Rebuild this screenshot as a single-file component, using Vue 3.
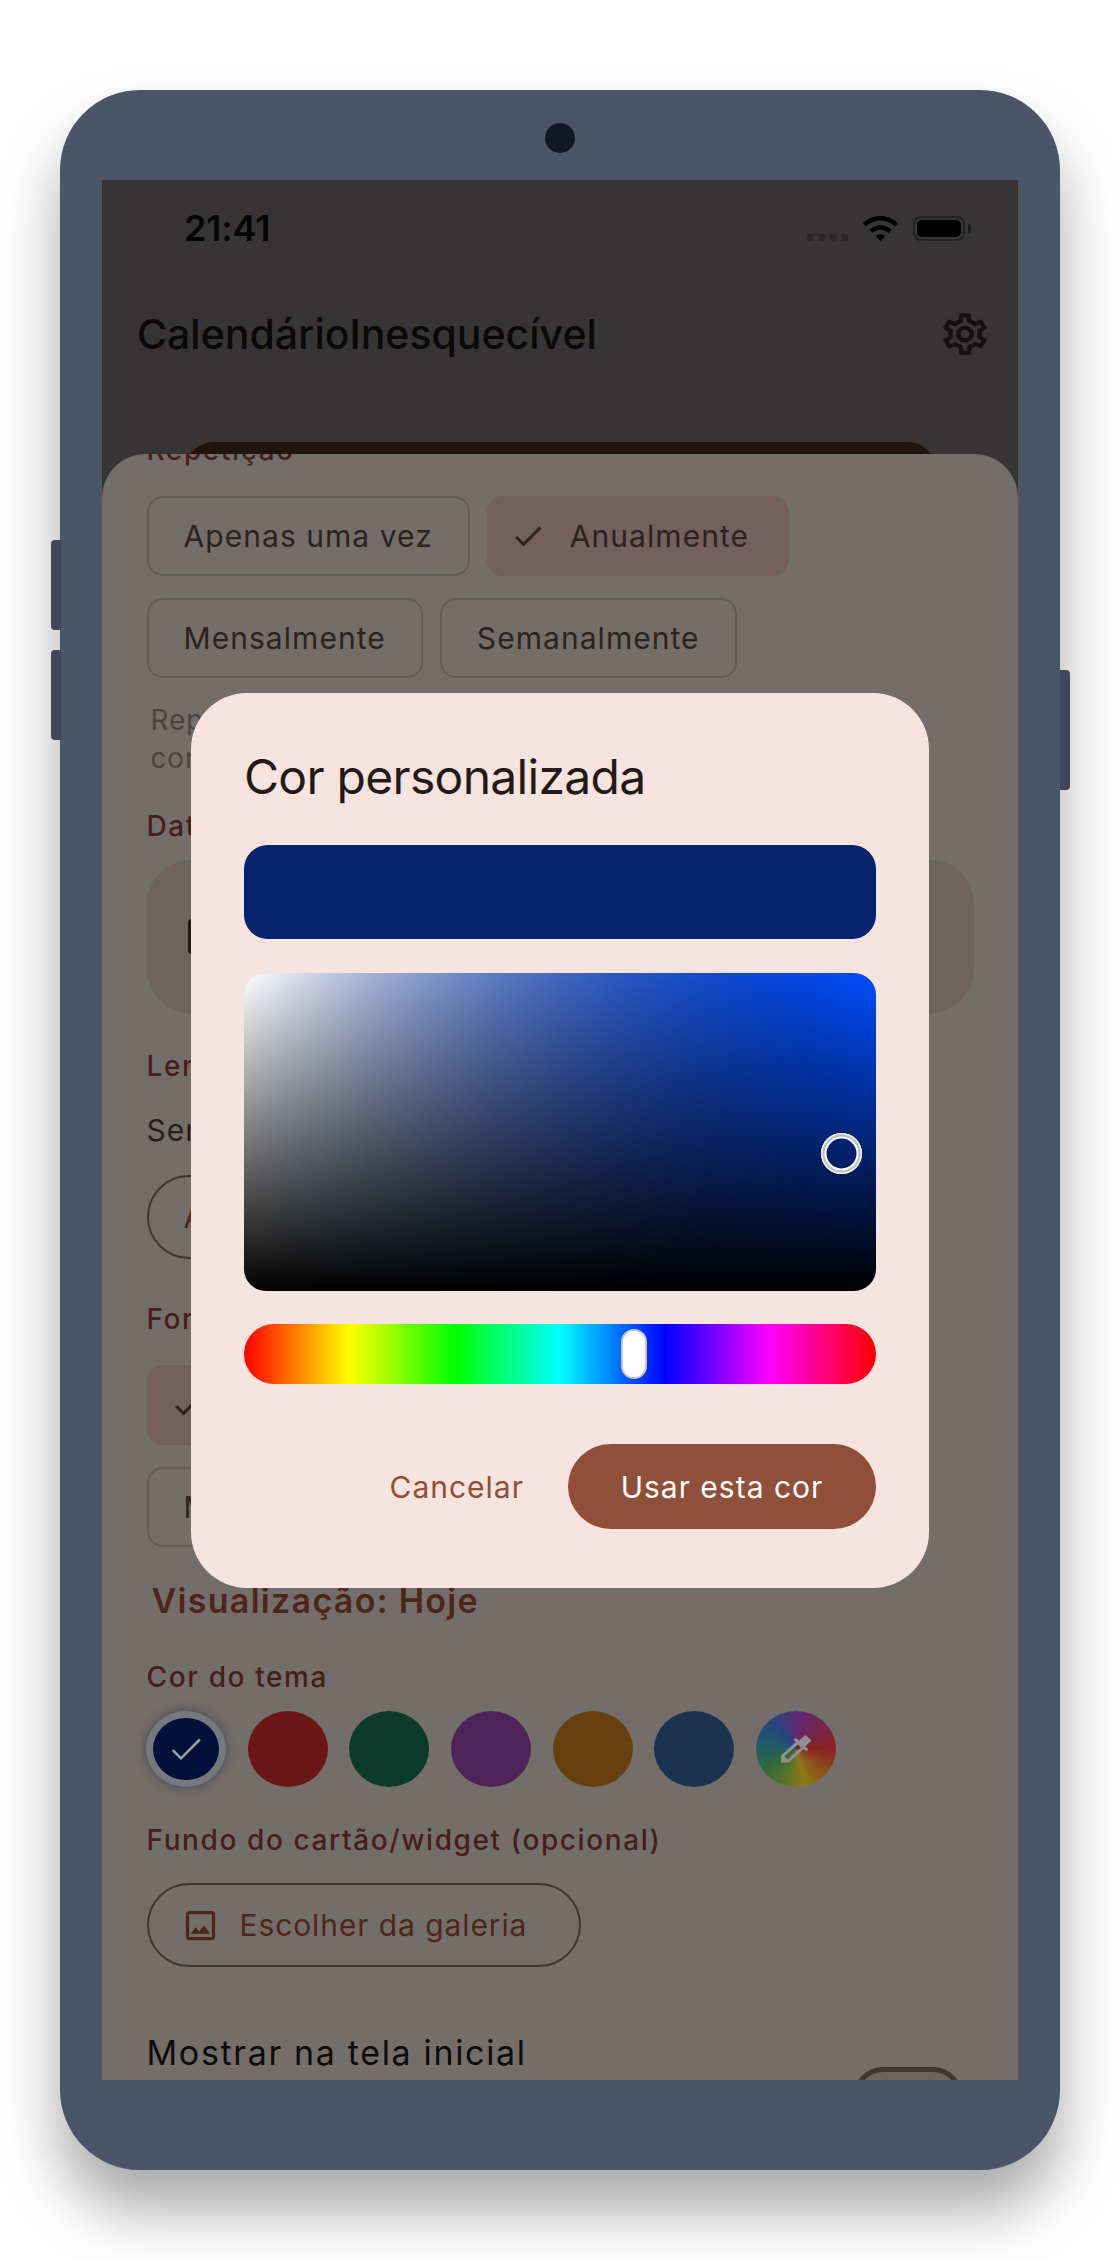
<script setup>
const swatches = ['#6b1717', '#0b3b2a', '#4e235a', '#67400f', '#1b334f']
const gear = 'M19.43 12.98c.04-.32.07-.64.07-.98 0-.34-.03-.66-.07-.98l2.11-1.65c.19-.15.24-.42.12-.64l-2-3.46c-.09-.16-.26-.25-.44-.25-.06 0-.12.01-.17.03l-2.49 1c-.52-.4-1.08-.73-1.69-.98l-.38-2.65C14.46 2.18 14.25 2 14 2h-4c-.25 0-.46.18-.49.42l-.38 2.65c-.61.25-1.17.59-1.69.98l-2.49-1c-.06-.02-.12-.03-.18-.03-.17 0-.34.09-.43.25l-2 3.46c-.13.22-.07.49.12.64l2.11 1.65c-.04.32-.07.65-.07.98 0 .33.03.66.07.98l-2.11 1.65c-.19.15-.24.42-.12.64l2 3.46c.09.16.26.25.44.25.06 0 .12-.01.17-.03l2.49-1c.52.4 1.08.73 1.69.98l.38 2.65c.03.24.24.42.49.42h4c.25 0 .46-.18.49-.42l.38-2.65c.61-.25 1.17-.59 1.69-.98l2.49 1c.06.02.12.03.18.03.17 0 .34-.09.43-.25l2-3.46c.12-.22.07-.49-.12-.64l-2.11-1.65zm-1.98-1.71c.04.31.05.52.05.73 0 .21-.02.43-.05.73l-.14 1.13.89.7 1.08.84-.7 1.21-1.27-.51-1.04-.42-.9.68c-.43.32-.84.56-1.25.73l-1.06.43-.16 1.13-.2 1.35h-1.4l-.19-1.35-.16-1.13-1.06-.43c-.43-.18-.83-.41-1.23-.71l-.91-.7-1.06.43-1.27.51-.7-1.21 1.08-.84.89-.7-.14-1.13c-.03-.31-.05-.54-.05-.74s.02-.43.05-.73l.14-1.13-.89-.7-1.08-.84.7-1.21 1.27.51 1.04.42.9-.68c.43-.32.84-.56 1.25-.73l1.06-.43.16-1.13.2-1.35h1.39l.19 1.35.16 1.13 1.06.43c.43.18.83.41 1.23.71l.91.7 1.06-.43 1.27-.51.7 1.21-1.07.85-.89.7.14 1.13zM12 8c-2.21 0-4 1.79-4 4s1.79 4 4 4 4-1.79 4-4-1.79-4-4-4zm0 6c-1.1 0-2-.9-2-2s.9-2 2-2 2 .9 2 2-.9 2-2 2z'
const check = 'M9 16.17L4.83 12l-1.41 1.41L9 19 21 7l-1.41-1.41z'
</script>

<template>
  <div class="page">
    <div class="phone">
      <span class="hw hw-l1"></span>
      <span class="hw hw-l2"></span>
      <span class="hw hw-r"></span>
      <span class="camera"></span>

      <div class="screen">
        <div class="status">
          <span class="time">21:41</span>
          <div class="status-icons">
            <div class="dots"><i></i><i></i><i></i><i></i></div>
            <svg class="wifi" viewBox="1 4.4 22 15.6" preserveAspectRatio="none"><path d="M1 9l2 2c4.97-4.97 13.03-4.97 18 0l2-2C16.93 2.93 7.08 2.93 1 9zm8 8l3 3 3-3c-1.65-1.66-4.34-1.66-6 0zm-4-4l2 2c2.76-2.76 7.24-2.76 10 0l2-2C15.14 9.14 8.87 9.14 5 13z"/></svg>
            <div class="battery"><i></i></div>
            <span class="nub"></span>
          </div>
        </div>

        <div class="appbar">
          <span class="app-title">CalendárioInesquecível</span>
          <svg class="gear" viewBox="0 0 24 24" preserveAspectRatio="none"><path :d="gear"/></svg>
        </div>

        <div class="under-card"></div>

        <div class="sheet">
          <div class="sheet-body">
            <div class="label">Repetição</div>
            <div class="chips first">
              <span class="chip">Apenas uma vez</span>
              <span class="chip on">
                <svg class="chip-check" viewBox="0 0 24 24"><path :d="check"/></svg>Anualmente
              </span>
              <span class="chip">Mensalmente</span>
              <span class="chip">Semanalmente</span>
            </div>
            <p class="helper">Repete todos os anos na mesma data, como<br>contagem de aniversários e datas especiais</p>

            <div class="label l-date">Data do evento</div>
            <div class="tile">
              <span class="tile-icon"></span>
            </div>

            <div class="label l-rem">Lembretes</div>
            <div class="remtext">Sem lembretes</div>
            <div class="rem-pill">Adicionar lembrete</div>

            <div class="label l-fmt">Formato</div>
            <div class="chips first">
              <span class="chip on wide">
                <svg class="chip-check" viewBox="0 0 24 24"><path :d="check"/></svg>Dias restantes
              </span>
              <span class="chip wide">Meses e dias</span>
            </div>

            <div class="preview-title">Visualização: Hoje</div>

            <div class="label l-color">Cor do tema</div>
            <div class="swatches">
              <span class="swatch selected">
                <svg class="sw-check" viewBox="0 0 24 24"><path d="M4.1 12.7L9 17.6 20.3 6.3"/></svg>
              </span>
              <span v-for="c in swatches" :key="c" class="swatch" :style="{ background: c }"></span>
              <span class="swatch rainbow">
                <svg class="dropper" viewBox="0 0 24 24" preserveAspectRatio="none"><path d="M20.71 5.63l-2.34-2.34c-.39-.39-1.02-.39-1.41 0l-3.12 3.12-1.93-1.91-1.41 1.41 1.42 1.42L3 16.25V21h4.75l8.92-8.92 1.42 1.42 1.41-1.41-1.92-1.92 3.12-3.12c.4-.4.4-1.03.01-1.42zM6.92 19L5 17.08l8.06-8.06 1.92 1.92L6.92 19z"/></svg>
              </span>
            </div>

            <div class="label l-bg">Fundo do cartão/widget (opcional)</div>
            <div class="gallery">
              <svg class="img-icon" viewBox="0 0 24 24"><path d="M19 5v14H5V5h14m0-2H5c-1.1 0-2 .9-2 2v14c0 1.1.9 2 2 2h14c1.1 0 2-.9 2-2V5c0-1.1-.9-2-2-2zm-4.86 8.86l-3 3.87L9 13.14 6 17h12l-3.86-5.14z"/></svg>
              <span>Escolher da galeria</span>
            </div>

            <div class="home-row">
              <span class="home-text">Mostrar na tela inicial</span>
              <span class="switch"></span>
            </div>
          </div>
        </div>

        <div class="dialog">
          <h2 class="dlg-title">Cor personalizada</h2>
          <div class="dlg-preview"></div>
          <div class="sv">
            <span class="sv-thumb"></span>
          </div>
          <div class="hue">
            <span class="hue-thumb"></span>
          </div>
          <div class="actions">
            <span class="cancel">Cancelar</span>
            <span class="use">Usar esta cor</span>
          </div>
        </div>
      </div>
    </div>
  </div>
</template>

<style>
html, body { margin: 0; background: #fff; }
</style>

<style scoped>
* { box-sizing: border-box; }
.page {
  width: 1120px;
  height: 2260px;
  padding-top: 90px;
  display: flex;
  justify-content: center;
  overflow: hidden;
  font-family: Inter, "Noto Sans", sans-serif;
  background: #fff;
}
.phone {
  position: relative;
  width: 1000px;
  height: 2080px;
  padding: 90px 42px;
  background: #4a5568;
  border-radius: 80px;
  box-shadow: 0 40px 60px rgba(0, 0, 0, 0.34);
}
.hw { position: absolute; width: 10px; background: #3f4859; }
.hw-l1 { left: -9px; top: 450px; height: 90px; border-radius: 4px 0 0 4px; }
.hw-l2 { left: -9px; top: 560px; height: 90px; border-radius: 4px 0 0 4px; }
.hw-r { right: -10px; top: 580px; height: 120px; border-radius: 0 4px 4px 0; }
.camera {
  position: absolute;
  left: 485px;
  top: 33px;
  width: 30px;
  height: 30px;
  border-radius: 50%;
  background: #111827;
}
.screen {
  position: relative;
  width: 916px;
  height: 1900px;
  background: #363434;
  overflow: hidden;
  display: flex;
  flex-direction: column;
}
.status {
  height: 96px;
  flex: none;
  display: flex;
  align-items: center;
  justify-content: space-between;
  padding: 0 47px 0 82px;
}
.time { font-size: 36px; font-weight: 600; color: #050505; letter-spacing: -0.2px; }
.status-icons { display: flex; align-items: flex-end; height: 25px; }
.dots { display: flex; gap: 4.4px; margin-right: 15px; }
.dots i { width: 7px; height: 7px; border-radius: 2px; background: #2a2828; }
.wifi { width: 35px; height: 25px; margin-right: 15px; }
.wifi path { fill: #000; }
.battery {
  width: 52px;
  height: 25px;
  border: 2px solid #242222;
  border-radius: 8px;
  padding: 2px;
}
.battery i { display: block; width: 100%; height: 100%; background: #000; border-radius: 5px; }
.nub { width: 3px; height: 9px; margin: 0 0 8px 3px; background: #1c1a1a; border-radius: 0 3px 3px 0; }

.appbar {
  height: 116px;
  flex: none;
  display: flex;
  align-items: center;
  justify-content: space-between;
  padding: 0 26px 0 35px;
}
.app-title { font-size: 41px; font-weight: 500; color: #0a0908; letter-spacing: 0; }
.gear { width: 54px; height: 50px; }
.gear path { fill: #141211; }

.under-card {
  flex: none;
  height: 30px;
  margin: 50px 81px 0 82px;
  background: #201411;
  border-radius: 30px 30px 0 0;
}
.sheet {
  flex: 1;
  min-height: 0;
  margin-top: -18px;
  position: relative;
  background: #746e6a;
  border-radius: 44px 44px 0 0;
  overflow: hidden;
}
.sheet-body { margin-top: -19px; padding: 0 44px 0 44.5px; }
.label {
  height: 30px;
  line-height: 30px;
  font-size: 28px;
  font-weight: 500;
  color: #45201a;
  letter-spacing: 1.6px;
  white-space: nowrap;
}
.chips { display: flex; flex-wrap: wrap; gap: 22px 17px; }
.chips.first { margin-top: 31px; }
.chip {
  height: 80px;
  display: inline-flex;
  align-items: center;
  padding: 0 35px;
  border: 2px solid #655a56;
  border-radius: 16px;
  font-size: 30px;
  color: #2a2320;
  letter-spacing: 1.05px;
  white-space: nowrap;
}
.chip.on { background: #74605d; border-color: #74605d; padding-left: 21px; padding-right: 38px; }
.chip.wide { min-width: 420px; }
.chip-check { width: 36px; height: 36px; margin-right: 24px; fill: #2a2220; }
.helper {
  margin: 23px 0 0 4px;
  font-size: 28px;
  line-height: 38px;
  color: #4a4441;
  letter-spacing: 0.8px;
  white-space: nowrap;
}
.l-date { margin-top: 34px; }
.tile {
  margin-top: 19px;
  height: 153px;
  display: flex;
  align-items: center;
  padding-left: 41px;
  background: #6e635f;
  border-radius: 44px;
}
.tile-icon { width: 40px; height: 35px; border-radius: 4px; background: #1d1a18; }
.l-rem { margin-top: 38px; }
.remtext {
  margin-top: 30px;
  height: 38px;
  line-height: 38px;
  font-size: 30px;
  color: #231f1d;
  letter-spacing: 1px;
}
.rem-pill {
  margin-top: 26px;
  width: 440px;
  height: 84px;
  display: flex;
  align-items: center;
  padding-left: 35px;
  border: 2px solid #40362f;
  border-radius: 42px;
  font-size: 30px;
  color: #4f261a;
  letter-spacing: 1px;
  white-space: nowrap;
}
.l-fmt { margin-top: 45px; }
.preview-title {
  margin: 34px 0 0 5px;
  height: 40px;
  line-height: 40px;
  font-size: 34px;
  font-weight: 600;
  color: #4c261b;
  letter-spacing: 1.3px;
}
.l-color { margin-top: 41px; }
.swatches { margin-top: 19px; margin-left: -0.5px; display: flex; gap: 21.7px; }
.swatch {
  width: 80px;
  height: 76px;
  border-radius: 50%;
  flex: none;
  display: flex;
  align-items: center;
  justify-content: center;
}
.swatch.selected {
  background: #001137;
  border: 7px solid #75787c;
  box-shadow: 0 0 10px 2px rgba(0, 17, 55, 0.3);
}
.sw-check { width: 40px; height: 40px; fill: none; stroke: #9c9ea1; stroke-width: 1.5; }
.rainbow {
  background: conic-gradient(#5c2a78, #8b2222 90deg, #8a7a17 165deg, #2f6b3a 235deg, #1f5a6a 280deg, #26457f 320deg, #5c2a78);
}
.dropper { width: 40px; height: 36px; fill: #8f8f8f; }
.l-bg { margin-top: 38px; }
.gallery {
  margin-top: 28px;
  width: 434px;
  height: 84px;
  display: flex;
  align-items: center;
  padding-left: 32px;
  border: 2px solid #40362f;
  border-radius: 42px;
  font-size: 30px;
  color: #4f261a;
  letter-spacing: 0.9px;
}
.img-icon { width: 39px; height: 39px; margin-right: 20px; fill: #4f261a; }
.home-row { margin-top: 66px; display: flex; justify-content: space-between; }
.home-text {
  height: 40px;
  line-height: 40px;
  font-size: 34px;
  color: #0e0c0b;
  letter-spacing: 1.65px;
}
.switch {
  width: 110px;
  height: 60px;
  margin: 34px 11px 0 0;
  flex: none;
  border: 5px solid #3e3734;
  border-radius: 30px;
  background: #6e635f;
}

.dialog {
  position: absolute;
  left: 89px;
  top: 513px;
  width: 738px;
  height: 895px;
  padding: 54px 53px 0;
  background: #f7e4de;
  border-radius: 56px;
}
.dlg-title {
  margin: 0;
  height: 60px;
  line-height: 60px;
  font-size: 48px;
  font-weight: 400;
  color: #231a17;
  letter-spacing: -0.7px;
}
.dlg-preview { margin-top: 38px; height: 94px; background: #06246d; border-radius: 24px; }
.sv {
  position: relative;
  margin-top: 34px;
  height: 318px;
  border-radius: 22px;
  background:
    linear-gradient(to bottom, rgba(0, 0, 0, 0), #000),
    linear-gradient(to right,
      rgba(255, 255, 255, 1),
      rgba(230, 230, 230, 0.9),
      rgba(204, 204, 204, 0.8),
      rgba(179, 179, 179, 0.7),
      rgba(153, 153, 153, 0.6),
      rgba(128, 128, 128, 0.5),
      rgba(102, 102, 102, 0.4),
      rgba(77, 77, 77, 0.3),
      rgba(51, 51, 51, 0.2),
      rgba(26, 26, 26, 0.1),
      rgba(0, 0, 0, 0)),
    #004cff;
}
.sv-thumb {
  position: absolute;
  left: 577px;
  top: 160px;
  width: 41px;
  height: 41px;
  border-radius: 50%;
  box-shadow:
    inset 0 0 0 1.5px #f0f0f0,
    inset 0 0 0 3.5px #bdbdbd,
    inset 0 0 0 5.5px #fff;
}
.hue {
  position: relative;
  margin-top: 33px;
  height: 60px;
  border-radius: 30px;
  background: linear-gradient(to right, #f00, #ff0, #0f0, #0ff, #00f, #f0f, #f00);
}
.hue-thumb {
  position: absolute;
  left: 377px;
  top: 5px;
  width: 26px;
  height: 50px;
  border-radius: 13px;
  background: #fff;
  border: 2px solid #c8c8c8;
}
.actions {
  margin-top: 60px;
  display: flex;
  justify-content: flex-end;
  align-items: center;
  gap: 44px;
}
.cancel { font-size: 30px; color: #8f4f38; letter-spacing: 1px; }
.use {
  width: 308px;
  height: 85px;
  display: flex;
  align-items: center;
  justify-content: center;
  border-radius: 43px;
  background: #8f4f38;
  color: #fff;
  font-size: 30px;
  letter-spacing: 1px;
}
</style>
